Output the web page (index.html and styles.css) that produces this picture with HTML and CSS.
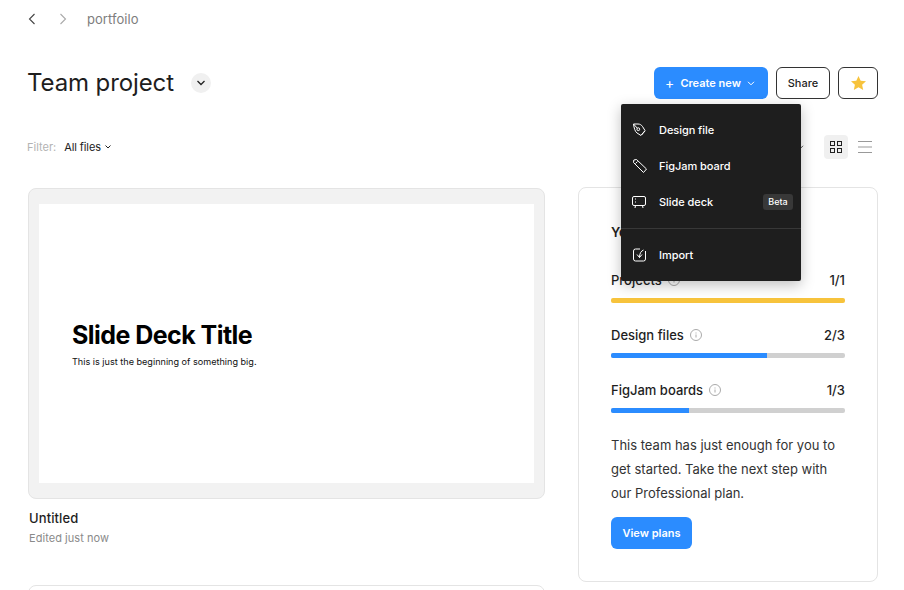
FILE: index.html
```html
<!DOCTYPE html>
<html lang="en">
<head>
<meta charset="utf-8">
<title>Team project</title>
<link rel="stylesheet" href="styles.css">
</head>
<body>
<div class="page">
  <nav class="crumbs">
    <svg class="nav-ico" width="8" height="12" viewBox="0 0 8 12"><path d="M6.500 1 1.500 6l5 5" fill="none" stroke="#444" stroke-width="1.100"/></svg>
    <svg class="nav-ico" width="8" height="12" viewBox="0 0 8 12"><path d="M1.500 1l5 5-5 5" fill="none" stroke="#aaa" stroke-width="1.100"/></svg>
    <span class="crumb-text">portfoilo</span>
  </nav>
  <header class="head">
    <h1 class="title">Team project</h1>
    <span class="title-toggle"><svg width="10" height="6" viewBox="0 0 10 6"><path d="M1.500 1 5 4.500 8.500 1" fill="none" stroke="#222" stroke-width="1.300"/></svg></span>
    <div class="actions">
      <div class="create-wrap">
        <button class="btn-primary create"><span class="plus">+</span>Create new<svg width="8" height="5" viewBox="0 0 8 5"><path d="M1 .8l3 3 3-3" fill="none" stroke="#fff" stroke-width="1"/></svg></button>
        <div class="menu">
          <div class="menu-item">
            <svg class="menu-ico" width="16" height="16" viewBox="0 0 16 16" fill="none" stroke="#fff" stroke-width="1"><path d="M1.500 2H6C8 2 9.500 3 10.500 4.500L13 8.500 9 13.500 5 11C3 9.500 2 6 1.500 2Z"/><circle cx="6.300" cy="7.200" r="1.400"/><path d="M1.500 2 5.300 6.200M9.500 13 13 9"/></svg>
            <span>Design file</span>
          </div>
          <div class="menu-item">
            <svg class="menu-ico" width="16" height="16" viewBox="0 0 16 16" fill="none" stroke="#fff" stroke-width="1"><path d="M1.500 4.500 1.800 2 4.500 1.500 14.500 11 11.500 14.500 1.500 4.500Z"/><path d="M3.500 5.500 5.500 3.500"/></svg>
            <span>FigJam board</span>
          </div>
          <div class="menu-item">
            <svg class="menu-ico" width="16" height="16" viewBox="0 0 16 16" fill="none" stroke="#fff" stroke-width="1"><rect x=".5" y="2.500" width="13" height="9" rx="1.500"/><path d="M3 5h1M3 8h1M3.500 11.500l-.5 2.500M10.500 11.500l.5 2.500"/></svg>
            <span>Slide deck</span>
            <span class="beta">Beta</span>
          </div>
          <div class="menu-sep"></div>
          <div class="menu-item">
            <svg class="menu-ico" width="16" height="16" viewBox="0 0 16 16" fill="none" stroke="#fff" stroke-width="1"><path d="M8 2H3.500a2 2 0 0 0-2 2v8a2 2 0 0 0 2 2h8a2 2 0 0 0 2-2V4"/><path d="M11.500 3C9 4 7.500 6.500 7.500 10.500M5 7.500 7.500 10.500 10 7.500"/></svg>
            <span>Import</span>
          </div>
        </div>
      </div>
      <button class="btn-outline share">Share</button>
      <button class="btn-outline star"><svg width="15" height="14" viewBox="0 0 15 14"><path d="M7.500 0l2.200 4.700 5.300.6-3.900 3.500 1.100 5.200-4.700-2.700-4.700 2.700 1.100-5.200L0 5.300l5.300-.6Z" fill="#f7c33c"/></svg></button>
    </div>
  </header>
  <div class="filter-row">
    <span class="filter-label">Filter:</span>
    <span class="filter-value">All files</span>
    <svg width="6" height="4" viewBox="0 0 6 4"><path d="M.5.500 3 3 5.500.500" fill="none" stroke="#222" stroke-width="1"/></svg>
    <div class="views">
      <svg class="sort-caret" width="8" height="5" viewBox="0 0 8 5"><path d="M1 .8l3 3 3-3" fill="none" stroke="#555" stroke-width="1"/></svg>
      <span class="view-grid"><svg width="14" height="14" viewBox="0 0 14 14" fill="none" stroke="#222" stroke-width="1"><rect x="1.500" y="1.500" width="4" height="4"/><rect x="8.500" y="1.500" width="4" height="4"/><rect x="1.500" y="8.500" width="4" height="4"/><rect x="8.500" y="8.500" width="4" height="4"/></svg></span>
      <span class="view-list"><svg width="14" height="12" viewBox="0 0 14 12" stroke="#999" stroke-width="1"><path d="M0 .5h14M0 6h14M0 11.500h14"/></svg></span>
    </div>
  </div>
  <main class="content">
    <section class="files">
      <article class="file">
        <div class="thumb">
          <div class="slide">
            <h2 class="slide-title">Slide Deck Title</h2>
            <p class="slide-sub">This is just the beginning of something big.</p>
          </div>
        </div>
        <div class="file-name">Untitled</div>
        <div class="file-meta">Edited just now</div>
      </article>
      <div class="thumb-next"></div>
    </section>
    <aside class="usage">
      <h3 class="usage-title">You have</h3>
      <div class="meter">
        <div class="meter-row"><span class="meter-label">Projects<svg class="info" width="12" height="12" viewBox="0 0 12 12" fill="none" stroke="#aaa"><circle cx="6" cy="6" r="5.500"/><path d="M6 5.500v3M6 3.500v1"/></svg></span><span class="meter-count">1/1</span></div>
        <div class="bar"><div class="fill yellow" style="width:100%"></div></div>
      </div>
      <div class="meter">
        <div class="meter-row"><span class="meter-label">Design files<svg class="info" width="12" height="12" viewBox="0 0 12 12" fill="none" stroke="#aaa"><circle cx="6" cy="6" r="5.500"/><path d="M6 5.500v3M6 3.500v1"/></svg></span><span class="meter-count">2/3</span></div>
        <div class="bar"><div class="fill" style="width:66.7%"></div></div>
      </div>
      <div class="meter">
        <div class="meter-row"><span class="meter-label">FigJam boards<svg class="info" width="12" height="12" viewBox="0 0 12 12" fill="none" stroke="#aaa"><circle cx="6" cy="6" r="5.500"/><path d="M6 5.500v3M6 3.500v1"/></svg></span><span class="meter-count">1/3</span></div>
        <div class="bar"><div class="fill" style="width:33.3%"></div></div>
      </div>
      <p class="usage-text">This team has just enough for you to get started. Take the next step with our Professional plan.</p>
      <button class="btn-primary plans">View plans</button>
    </aside>
  </main>
</div>
</body>
</html>
```
FILE: styles.css
```css
* { box-sizing: border-box; }
html, body { margin: 0; height: 100%; overflow: hidden; background: #fff; }
body { font-family: Inter, "Liberation Sans", sans-serif; color: #1e1e1e; }
button { font-family: inherit; cursor: pointer; }
.page { width: 904px; height: 590px; padding: 0 26px 0 28px; overflow: hidden; }

.crumbs { height: 38px; display: flex; align-items: center; }
.nav-ico { flex: none; }
.nav-ico:nth-child(1) { margin-right: 23px; }
.nav-ico:nth-child(2) { margin-right: 20px; }
.crumb-text { font-size: 13px; color: #7d7d7d; letter-spacing: .05px; }

.head { margin-top: 29px; height: 32px; display: flex; align-items: center; }
.title { margin: 0 0 0 -1px; font-size: 24px; font-weight: 400; line-height: 32px; letter-spacing: -.1px; color: #1e1e1e; }
.title-toggle { margin-left: 17px; width: 20px; height: 20px; border-radius: 50%; background: #f0f0f0; display: flex; align-items: center; justify-content: center; }
.actions { margin-left: auto; display: flex; gap: 8px; }
.create-wrap { position: relative; }
.btn-primary { background: #2b8cff; color: #fff; border: 0; border-radius: 6px; font-weight: 600; font-size: 11px; }
.create { width: 114px; height: 32px; display: flex; align-items: center; justify-content: center; gap: 6px; padding: 0 2px 0 0; }
.plus { font-size: 14px; font-weight: 400; line-height: 1; }
.btn-outline { background: #fff; border: 1px solid #333; border-radius: 6px; height: 32px; font-size: 11px; font-weight: 500; color: #1e1e1e; padding: 0; display: flex; align-items: center; justify-content: center; }
.share { width: 54px; }
.star { width: 40px; }

.menu { position: absolute; left: -33px; top: 37px; width: 180px; height: 177px; background: #1e1e1e; border-radius: 2px; box-shadow: 0 4px 14px rgba(0,0,0,.25); padding: 8px 0; z-index: 5; color: #fff; font-size: 11px; font-weight: 500; letter-spacing: -.05px; }
.menu-item { height: 36px; display: flex; align-items: center; padding: 0 8px 0 11px; }
.menu-ico { margin-right: 11px; flex: none; }
.beta { margin-left: auto; width: 30px; height: 16px; background: #383838; border-radius: 3px; font-size: 9px; font-weight: 500; line-height: 16px; text-align: center; letter-spacing: 0; }
.menu-sep { height: 1px; background: #383838; margin: 8px 0; }

.filter-row { margin-top: 32px; height: 32px; display: flex; align-items: center; font-size: 11px; }
.filter-label { color: #b3b3b3; margin: 0 8px 0 -1px; }
.filter-value { color: #222; margin-right: 4px; letter-spacing: -.1px; }
.views { margin-left: auto; display: flex; align-items: center; }
.sort-caret { margin-right: 20px; }
.view-grid { width: 24px; height: 24px; border-radius: 4px; background: #f0f0f0; display: flex; align-items: center; justify-content: center; }
.view-list { width: 30px; height: 24px; display: flex; align-items: center; justify-content: flex-end; padding-right: 6px; }
.view-list svg { display: block; }

.content { margin-top: 25px; display: flex; gap: 33px; align-items: flex-start; }
.files { width: 517px; flex: none; }
.thumb { height: 311px; background: #f2f2f2; border: 1px solid #e4e4e4; border-radius: 8px; padding: 15px 10px; }
.slide { height: 279px; background: #fff; padding: 116px 0 0 33px; }
.slide-title { margin: 0; font-size: 25px; line-height: 30px; font-weight: 700; color: #000; letter-spacing: -.55px; }
.slide-sub { margin: 6px 0 0; font-size: 9.100px; line-height: 12px; color: #111; }
.file-name { margin: 11px 0 0 1px; font-size: 13px; font-weight: 500; line-height: 16px; color: #1e1e1e; letter-spacing: .1px; }
.file-meta { margin: 5px 0 0 1px; font-size: 11px; line-height: 14px; color: #8a8a8a; letter-spacing: .05px; }
.thumb-next { margin-top: 40px; height: 100px; border: 1px solid #e4e4e4; border-radius: 8px; }

.usage { width: 300px; height: 395px; flex: none; margin-top: -1px; border: 1px solid #e4e4e4; border-radius: 8px; padding: 36px 32px 0; }
.usage-title { margin: 0 0 32px; font-size: 13px; line-height: 16px; font-weight: 600; }
.meter { margin-bottom: 24px; }
.meter-row { display: flex; justify-content: space-between; align-items: center; height: 16px; font-size: 13px; font-weight: 500; color: #1e1e1e; }
.meter-label { display: flex; align-items: center; gap: 6px; }
.info { flex: none; }
.bar { margin-top: 10px; height: 5px; border-radius: 2px; background: #d0d0d0; overflow: hidden; }
.fill { height: 100%; background: #2b8cff; }
.fill.yellow { background: #f7c33c; }
.usage-text { margin: -4px 0 0; font-size: 13px; line-height: 24px; color: #333; }
.plans { margin-top: 12px; width: 81px; height: 32px; display: block; padding: 0; }
```
